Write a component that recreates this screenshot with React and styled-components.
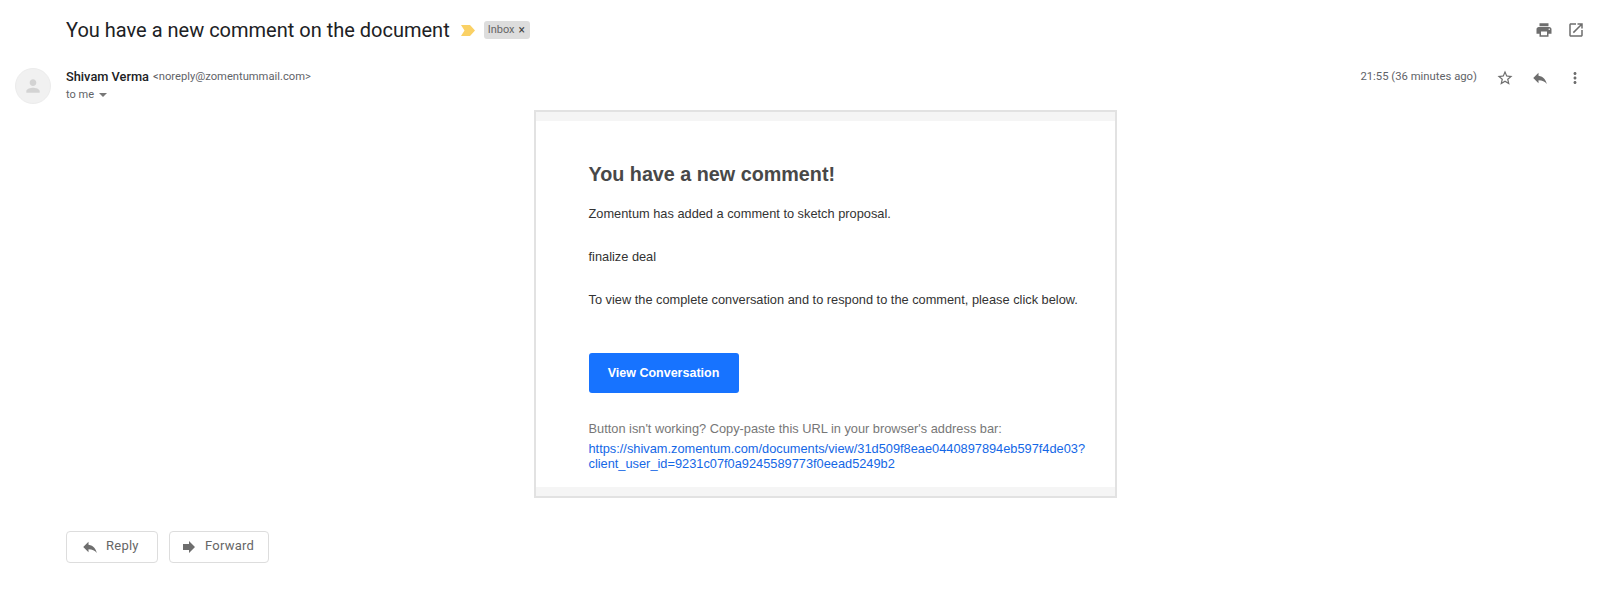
import React from 'react';
import styled, { createGlobalStyle } from 'styled-components';

const GlobalStyle = createGlobalStyle`
  html, body {
    margin: 0;
    padding: 0;
    background: #fff;
    font-family: Roboto, "Liberation Sans", sans-serif;
  }
`;

const paths = {
  print: 'M19 8H5c-1.66 0-3 1.34-3 3v6h4v4h12v-4h4v-6c0-1.66-1.34-3-3-3zm-3 11H8v-5h8v5zm3-7c-.55 0-1-.45-1-1s.45-1 1-1 1 .45 1 1-.45 1-1 1zm-1-9H6v4h12V3z',
  open: 'M19 19H5V5h7V3H5c-1.11 0-2 .9-2 2v14c0 1.1.89 2 2 2h14c1.1 0 2-.9 2-2v-7h-2v7zM14 3v2h3.59l-9.83 9.83 1.41 1.41L19 6.41V10h2V3h-7z',
  star: 'M22 9.24l-7.19-.62L12 2 9.19 8.63 2 9.24l5.46 4.73L5.82 21 12 17.27 18.18 21l-1.63-7.03L22 9.24zM12 15.4l-3.76 2.27 1-4.28-3.32-2.88 4.38-.38L12 6.1l1.71 4.04 4.38.38-3.32 2.88 1 4.28L12 15.4z',
  reply: 'M10 9V5l-7 7 7 7v-4.1c5 0 8.5 1.6 11 5.1-1-5-4-10-11-11z',
  more: 'M12 8c1.1 0 2-.9 2-2s-.9-2-2-2-2 .9-2 2 .9 2 2 2zm0 2c-1.1 0-2 .9-2 2s.9 2 2 2 2-.9 2-2-.9-2-2-2zm0 6c-1.1 0-2 .9-2 2s.9 2 2 2 2-.9 2-2-.9-2-2-2z',
  forward: 'M12 8V4l8 8-8 8v-4H4V8z',
  person: 'M12 12c2.21 0 4-1.79 4-4s-1.79-4-4-4-4 1.79-4 4 1.79 4 4 4zm0 2c-2.67 0-8 1.34-8 4v2h16v-2c0-2.66-5.33-4-8-4z',
};

const Icon = ({ name, size = 18, color = '#6e6e6e' }) => (
  <svg width={size} height={size} viewBox="0 0 24 24" fill={color} style={{ display: 'block' }}>
    <path d={paths[name]} />
  </svg>
);

const Page = styled.div`
  width: 1600px;
  height: 596px;
  overflow: hidden;
  display: flex;
  flex-direction: column;
`;

const SubjectRow = styled.div`
  height: 60px;
  padding: 0 15px 0 66px;
  display: flex;
  align-items: center;
`;

const Subject = styled.h2`
  margin: 0;
  font-size: 20px;
  font-weight: 400;
  color: #202124;
  white-space: nowrap;
`;

const Chevron = styled.svg`
  width: 14px;
  height: 11px;
  margin-left: 11px;
`;

const Chip = styled.span`
  margin-left: 9px;
  height: 17px;
  padding: 0 5px 1px 4px;
  box-sizing: content-box;
  display: flex;
  align-items: center;
  gap: 4px;
  border-radius: 3px;
  background: #ddd;
  color: #666;
  font-size: 11px;
`;

const ChipClose = styled.span`
  font-size: 12px;
  line-height: 1;
  color: #444;
`;

const TopActions = styled.div`
  margin-left: auto;
  display: flex;
  gap: 14px;
`;

const SenderRow = styled.div`
  display: flex;
  padding: 8px 8px 0 15px;
  height: 42px;
`;

const Avatar = styled.div`
  width: 36px;
  height: 36px;
  border-radius: 50%;
  background: #f1f1f1;
  border: 1px solid #ececec;
  box-sizing: border-box;
  display: flex;
  align-items: center;
  justify-content: center;
`;

const SenderInfo = styled.div`
  margin: -1px 0 0 15px;
  display: flex;
  flex-direction: column;
`;

const SenderLine = styled.div`
  height: 18px;
  display: flex;
  align-items: center;
  gap: 4px;
`;

const Name = styled.span`
  font-size: 12.8px;
  font-weight: 500;
  color: #202124;
`;

const Email = styled.span`
  font-size: 11.2px;
  color: #5f6368;
`;

const ToLine = styled.div`
  margin-top: 3px;
  display: flex;
  align-items: center;
  gap: 5px;
  font-size: 11px;
  color: #5f6368;
`;

const Caret = styled.span`
  width: 0;
  height: 0;
  border-left: 4px solid transparent;
  border-right: 4px solid transparent;
  border-top: 4px solid #777;
`;

const MetaActions = styled.div`
  margin-left: auto;
  display: flex;
  align-items: flex-start;
`;

const Time = styled.span`
  margin-right: 10px;
  font-size: 11.3px;
  line-height: 18px;
  color: #5f6368;
`;

const MetaIcon = styled.span`
  width: 35px;
  display: flex;
  justify-content: center;
  margin-top: 1px;
`;

const CardWrap = styled.div`
  padding: 0 16px 0 66px;
  display: flex;
  justify-content: center;
`;

const Card = styled.div`
  width: 583px;
  height: 388px;
  box-sizing: border-box;
  border: 2px solid #e2e2e2;
  background: #fff;
  display: flex;
  flex-direction: column;
  font-family: "Liberation Sans", Arial, sans-serif;
`;

const Strip = styled.div`
  height: 9px;
  background: #f5f5f5;
  flex-shrink: 0;
`;

const CardBody = styled.div`
  flex: 1;
  padding: 41px 30px 0 53px;
`;

const Heading = styled.h1`
  margin: 0;
  font-size: 19.75px;
  line-height: 24px;
  font-weight: 700;
  color: #484848;
`;

const Para = styled.p`
  margin: ${props => props.$top}px 0 0;
  font-size: 12.8px;
  line-height: 16px;
  color: #333;
  white-space: nowrap;
`;

const CtaButton = styled.a`
  margin-top: 45px;
  width: 150px;
  height: 40px;
  display: flex;
  align-items: center;
  justify-content: center;
  border-radius: 3px;
  background: #1773ff;
  color: #fff;
  font-size: 12.5px;
  font-weight: 700;
`;

const Help = styled.p`
  margin: 28px 0 0;
  font-size: 12.8px;
  line-height: 16px;
  color: #777;
  white-space: nowrap;
`;

const UrlLink = styled.a`
  display: block;
  margin-top: 4px;
  font-size: 12.8px;
  line-height: 15px;
  color: #1467e6;
`;

const ReplyRow = styled.div`
  margin-top: 33px;
  padding-left: 66px;
  display: flex;
  gap: 11px;
`;

const ReplyButton = styled.div`
  width: ${props => props.$width}px;
  height: 32px;
  box-sizing: border-box;
  border: 1px solid #ddd;
  border-radius: 4px;
  display: flex;
  align-items: center;
  padding-left: ${props => props.$pad}px;
  gap: 7px;
  color: #666;
  font-size: 13px;
  letter-spacing: 0.25px;
`;

const ReplyLabel = styled.span`
  margin-bottom: 4px;
`;

export default function App() {
  return (
    <Page>
      <GlobalStyle />
      <SubjectRow>
        <Subject>You have a new comment on the document</Subject>
        <Chevron viewBox="0 0 14 11">
          <path d="M0 0h9l5 5.5L9 11H0l3.5-5.5z" fill="#fad165" />
        </Chevron>
        <Chip>
          Inbox <ChipClose>×</ChipClose>
        </Chip>
        <TopActions>
          <Icon name="print" />
          <Icon name="open" />
        </TopActions>
      </SubjectRow>

      <SenderRow>
        <Avatar>
          <Icon name="person" size={20} color="#d3d3d3" />
        </Avatar>
        <SenderInfo>
          <SenderLine>
            <Name>Shivam Verma</Name>
            <Email>&lt;noreply@zomentummail.com&gt;</Email>
          </SenderLine>
          <ToLine>
            to me <Caret />
          </ToLine>
        </SenderInfo>
        <MetaActions>
          <Time>21:55 (36 minutes ago)</Time>
          <MetaIcon><Icon name="star" /></MetaIcon>
          <MetaIcon><Icon name="reply" /></MetaIcon>
          <MetaIcon><Icon name="more" /></MetaIcon>
        </MetaActions>
      </SenderRow>

      <CardWrap>
        <Card>
          <Strip />
          <CardBody>
            <Heading>You have a new comment!</Heading>
            <Para $top={20}>Zomentum has added a comment to sketch proposal.</Para>
            <Para $top={27}>finalize deal</Para>
            <Para $top={27}>To view the complete conversation and to respond to the comment, please click below.</Para>
            <CtaButton>View Conversation</CtaButton>
            <Help>Button isn't working? Copy-paste this URL in your browser's address bar:</Help>
            <UrlLink>
              https://shivam.zomentum.com/documents/view/31d509f8eae0440897894eb597f4de03?
              <br />
              client_user_id=9231c07f0a9245589773f0eead5249b2
            </UrlLink>
          </CardBody>
          <Strip />
        </Card>
      </CardWrap>

      <ReplyRow>
        <ReplyButton $width={92} $pad={14}>
          <Icon name="reply" size={18} /> <ReplyLabel>Reply</ReplyLabel>
        </ReplyButton>
        <ReplyButton $width={100} $pad={10}>
          <Icon name="forward" size={18} /> <ReplyLabel>Forward</ReplyLabel>
        </ReplyButton>
      </ReplyRow>
    </Page>
  );
}
